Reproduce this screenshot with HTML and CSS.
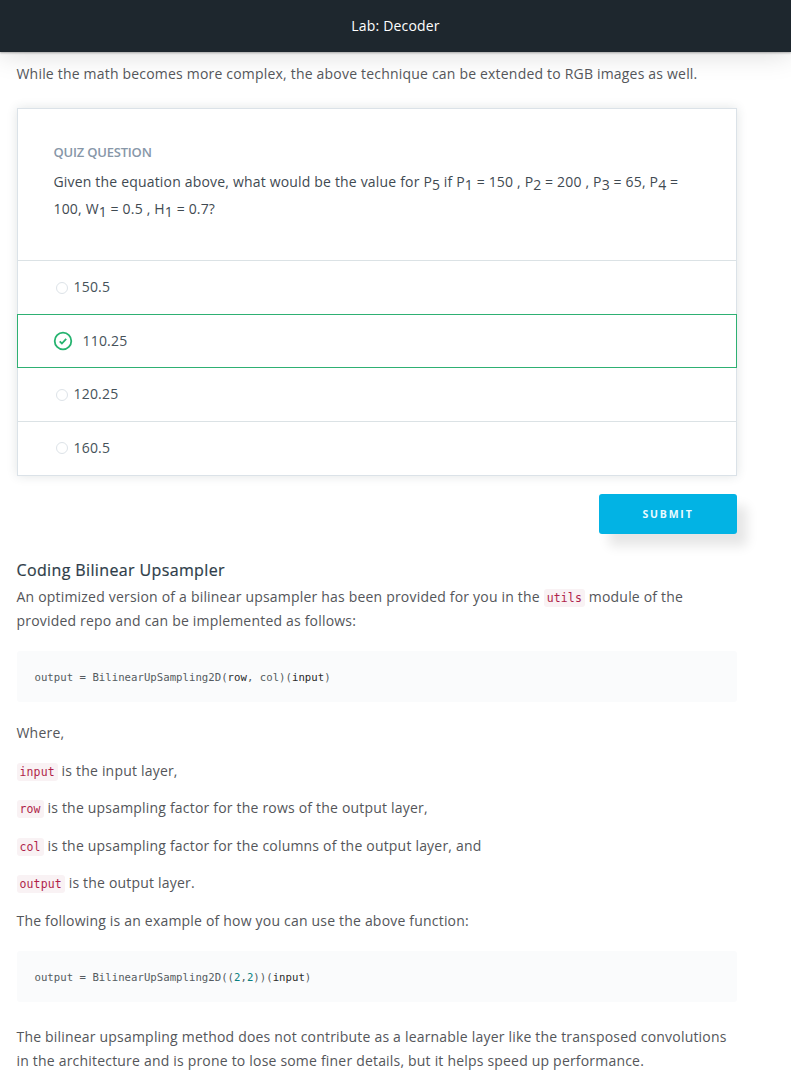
FILE: index.html
```html
<!DOCTYPE html>
<html lang="en">
<head>
<meta charset="utf-8">
<title>Lab: Decoder</title>
<link rel="stylesheet" href="styles.css">
</head>
<body>
<header class="topbar"><span class="topbar-title">Lab: Decoder</span></header>
<main class="content">
  <p class="text intro">While the math becomes more complex, the above technique can be extended to RGB images as well.</p>
  <section class="quiz">
    <div class="question">
      <h2 class="label">QUIZ QUESTION</h2>
      <p class="prompt">Given the equation above, what would be the value for P<sub>5</sub> if P<sub>1</sub> = 150 , P<sub>2</sub> = 200 , P<sub>3</sub> = 65, P<sub>4</sub> =<br>100, W<sub>1</sub> = 0.5 , H<sub>1</sub> = 0.7?</p>
    </div>
    <div class="option"><span class="radio"></span><span class="answer">150.5</span></div>
    <div class="option correct">
      <svg class="check" viewBox="0 0 20 20"><circle cx="10" cy="10" r="8.3"/><path d="M6.7 10.3l2.2 2.2 4.3-4.6"/></svg>
      <span>110.25</span>
    </div>
    <div class="option"><span class="radio"></span><span class="answer">120.25</span></div>
    <div class="option last"><span class="radio"></span><span class="answer">160.5</span></div>
  </section>
  <div class="actions"><button class="submit">SUBMIT</button></div>
  <h3 class="heading">Coding Bilinear Upsampler</h3>
  <p class="text">An optimized version of a bilinear upsampler has been provided for you in the <code class="code">utils</code> module of the<br>provided repo and can be implemented as follows:</p>
  <pre class="block">output = BilinearUpSampling2D(<span class="dark">row</span>, col)(<span class="dark">input</span>)</pre>
  <div class="notes">
    <p class="text">Where,</p>
    <p class="text"><code class="code">input</code> is the input layer,</p>
    <p class="text"><code class="code">row</code> is the upsampling factor for the rows of the output layer,</p>
    <p class="text"><code class="code">col</code> is the upsampling factor for the columns of the output layer, and</p>
    <p class="text"><code class="code">output</code> is the output layer.</p>
    <p class="text">The following is an example of how you can use the above function:</p>
  </div>
  <pre class="block">output = BilinearUpSampling2D((<span class="num">2</span>,<span class="num">2</span>))(<span class="dark">input</span>)</pre>
  <p class="text closing">The bilinear upsampling method does not contribute as a learnable layer like the transposed convolutions<br>in the architecture and is prone to lose some finer details, but it helps speed up performance.</p>
</main>
</body>
</html>
```
FILE: styles.css
```css
* { box-sizing: border-box; }
body { margin: 0; height: 1080px; overflow: hidden; background: #fff; font-family: "Open Sans", sans-serif; font-size: 14px; color: #525c65; }
p, h2, h3, pre { margin: 0; }
.topbar { height: 52px; padding-bottom: 2px; display: flex; align-items: center; justify-content: center; background: #1e272e; color: #fff; box-shadow: 0 1px 2px rgba(0,0,0,.3), 0 2px 28px rgba(0,0,0,.15); }
.topbar-title { letter-spacing: .17px; }
.content { width: 720px; margin-left: 17px; padding-top: 10px; }
.text { margin-left: -.5px; line-height: 24px; letter-spacing: .195px; white-space: nowrap; color: #54565a; }
.quiz { margin-top: 22px; height: 368px; border: 1px solid #dbe2e8; background: #fff; box-shadow: 0 0 10px rgba(46,61,73,.14); }
.question { height: 152px; padding: 32px 35.5px 0; border-bottom: 1px solid #dbe2e5; }
.label { font-size: 13px; line-height: 22px; font-weight: 600; color: #8797a8; letter-spacing: -.2px; }
.prompt { margin-top: 5px; line-height: 27px; color: #3f4a52; white-space: nowrap; letter-spacing: .18px; }
.prompt sub { font-size: 14px; line-height: 0; vertical-align: -3px; letter-spacing: 0; }
.option { height: 53px; display: flex; align-items: center; padding: 0 0 0 38px; color: #46525a; letter-spacing: .2px; }
.radio { width: 12px; height: 12px; margin-right: 5.5px; border: 1px solid #dde3e8; border-radius: 50%; }
.answer { padding-bottom: 2px; }
.correct { height: 54px; margin: 0 -1px; border: 1px solid #2eb073; padding: 0 0 1px 35px; }
.check { width: 20px; height: 20px; margin-right: 9.5px; fill: none; stroke: #25b36f; stroke-width: 1.8; }
.last { border-top: 1px solid #dbe2e5; height: 54px; padding-bottom: 1px; }
.actions { display: flex; justify-content: flex-end; margin-top: 18px; }
.submit { width: 138px; height: 40px; padding: 0 0 1px; border: 0; border-radius: 3px; background: #02b3e4; color: #e9faff; font: 700 10.5px "Open Sans", sans-serif; letter-spacing: 1.8px; box-shadow: 10px 12px 12px rgba(0,0,0,.1); }
.heading { margin: 24px 0 3px -.5px; font-size: 16px; line-height: 24px; font-weight: 500; letter-spacing: .37px; color: #2e3d49; -webkit-text-stroke: .2px #2e3d49; }
.code { display: inline-block; height: 18px; padding: 0 3px; border-radius: 3px; background: #f9f2f4; color: #b01f4a; font: 11.5px/18px "DejaVu Sans Mono", monospace; letter-spacing: .13px; }
.block { height: 51px; margin-top: 18px; padding-left: 17.5px; border-radius: 3px; background: #fafbfc; color: #555b61; font: 10.66px/53px "DejaVu Sans Mono", monospace; letter-spacing: .02px; }
.dark { color: #2b2b2b; }
.num { color: #087f80; }
.notes { display: grid; row-gap: 13.5px; margin-top: 19px; }
.closing { margin-top: 23px; }
```
